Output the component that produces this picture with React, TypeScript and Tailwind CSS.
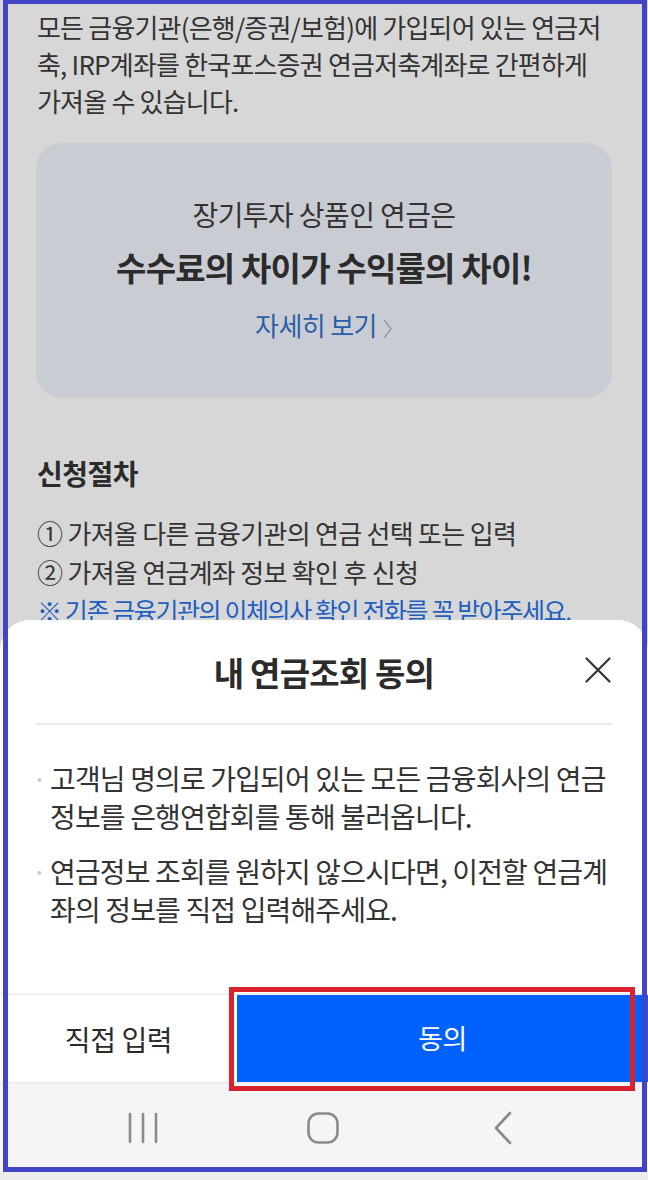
import React from "react";

function CloseIcon() {
  return (
    <svg width="26" height="26" viewBox="0 0 26 26" fill="none">
      <path d="M1.5 1.5L24.5 24.5M24.5 1.5L1.5 24.5" stroke="#333" strokeWidth="2.2" strokeLinecap="round" />
    </svg>
  );
}

function Chevron() {
  return (
    <svg width="10" height="20" viewBox="0 0 10 20" fill="none">
      <path d="M1.5 1.5L8 10L1.5 18.5" stroke="#9a9a9a" strokeWidth="1.4" strokeLinecap="round" strokeLinejoin="round" />
    </svg>
  );
}

function NavRecent() {
  return (
    <svg width="32" height="32" viewBox="0 0 32 32" fill="none">
      <path d="M3 2V30M16 2V30M29 2V30" stroke="#8a8a8a" strokeWidth="2.6" strokeLinecap="round" />
    </svg>
  );
}

function NavHome() {
  return (
    <svg width="34" height="34" viewBox="0 0 34 34" fill="none">
      <rect x="2.5" y="2.5" width="29" height="29" rx="10" stroke="#8a8a8a" strokeWidth="2.6" />
    </svg>
  );
}

function NavBack() {
  return (
    <svg width="22" height="34" viewBox="0 0 22 34" fill="none">
      <path d="M18 2L4 17L18 32" stroke="#8a8a8a" strokeWidth="2.6" strokeLinecap="round" strokeLinejoin="round" />
    </svg>
  );
}

export default function App() {
  return (
    <div className="relative w-[648px] h-[1180px] overflow-hidden bg-[#ececec] font-['Noto_Sans_CJK_KR','Noto_Sans',sans-serif] text-[#333]">
      <div className="relative h-[1172px] overflow-hidden bg-[#d7d7d7]">
        {/* page content */}
        <div className="px-[37px] pt-[8px]">
          <div className="text-[26px] leading-[37px] tracking-[-0.8px] text-[#333] whitespace-nowrap">
            <div>모든 금융기관(은행/증권/보험)에 가입되어 있는 연금저</div>
            <div>축, IRP계좌를 한국포스증권 연금저축계좌로 간편하게</div>
            <div>가져올 수 있습니다.</div>
          </div>

          <div className="mt-[24px] h-[255px] rounded-[26px] bg-[#c9cdd3] flex flex-col items-center pt-[56px] -mx-px">
            <div className="text-[28px] leading-[30px] tracking-[-0.6px] text-[#333]">장기투자 상품인 연금은</div>
            <div className="mt-[20px] text-[33px] leading-[36px] font-bold tracking-[-0.8px] text-[#2b2b2b]">수수료의 차이가 수익률의 차이!</div>
            <div className="mt-[25px] flex items-center gap-[6px] text-[26px] leading-[30px] tracking-[-0.6px] text-[#2a5ea8]">
              <span>자세히 보기</span>
              <span className="mt-[8px]"><Chevron /></span>
            </div>
          </div>

          <h2 className="mt-[57px] text-[28px] leading-[36px] font-bold tracking-[-0.5px] text-[#2b2b2b]">신청절차</h2>
          <div className="mt-[22px] text-[26px] leading-[39px] tracking-[-0.7px] text-[#333] whitespace-nowrap">
            <div>① 가져올 다른 금융기관의 연금 선택 또는 입력</div>
            <div>② 가져올 연금계좌 정보 확인 후 신청</div>
            <div className="text-[25px] text-[#1f5fbf] tracking-[-1.4px]">※ 기존 금융기관의 이체의사 확인 전화를 꼭 받아주세요.</div>
          </div>
        </div>

        {/* bottom sheet + nav bar */}
        <div className="absolute left-0 right-0 top-[620px] bottom-0 flex flex-col">
          <div className="flex-1 flex flex-col bg-white rounded-t-[30px]">
            <div className="relative pt-[34px] flex justify-center">
              <h3 className="text-[33px] leading-[36px] font-bold tracking-[-0.8px] text-[#2b2b2b]">내 연금조회 동의</h3>
              <button className="absolute right-[37px] top-[37px]"><CloseIcon /></button>
            </div>
            <div className="mx-[36px] mt-[33px] h-[2px] bg-[#ececec]" />
            <div className="pl-[37px] pr-[20px] pt-[34px] text-[28px] leading-[38px] tracking-[-0.85px] text-[#333] flex flex-col gap-[17px] whitespace-nowrap">
              <div className="flex">
                <span className="w-[13px] shrink-0 text-[#c8c8c8] text-[14px]">•</span>
                <div>
                  <div>고객님 명의로 가입되어 있는 모든 금융회사의 연금</div>
                  <div>정보를 은행연합회를 통해 불러옵니다.</div>
                </div>
              </div>
              <div className="flex">
                <span className="w-[13px] shrink-0 text-[#c8c8c8] text-[14px]">•</span>
                <div>
                  <div>연금정보 조회를 원하지 않으시다면, 이전할 연금계</div>
                  <div>좌의 정보를 직접 입력해주세요.</div>
                </div>
              </div>
            </div>
            <div className="mt-auto h-[89px] flex border-t-2 border-[#efefef]">
              <button className="w-[237px] flex items-center justify-center text-[28px] tracking-[-0.4px] text-[#2b2b2b]">직접 입력</button>
              <button className="flex-1 flex items-center justify-center bg-[#0062fe] text-[27px] tracking-[-0.6px] text-white">동의</button>
            </div>
          </div>
          <div className="h-[90px] bg-[#f5f5f7] border-t border-[#e8e8ea] flex items-center pl-[53px]">
            <div className="w-[180px] flex justify-center"><NavRecent /></div>
            <div className="w-[180px] flex justify-center"><NavHome /></div>
            <div className="w-[180px] flex justify-center"><NavBack /></div>
          </div>
        </div>
      </div>

      {/* annotation overlays */}
      <div className="pointer-events-none absolute left-[3px] top-[-1px] w-[644px] h-[1173px] border-[5px] border-[#4343c6]" />
      <div className="pointer-events-none absolute left-[229px] top-[987px] w-[406px] h-[104px] border-[5px] border-[#d8222d]" />
    </div>
  );
}
